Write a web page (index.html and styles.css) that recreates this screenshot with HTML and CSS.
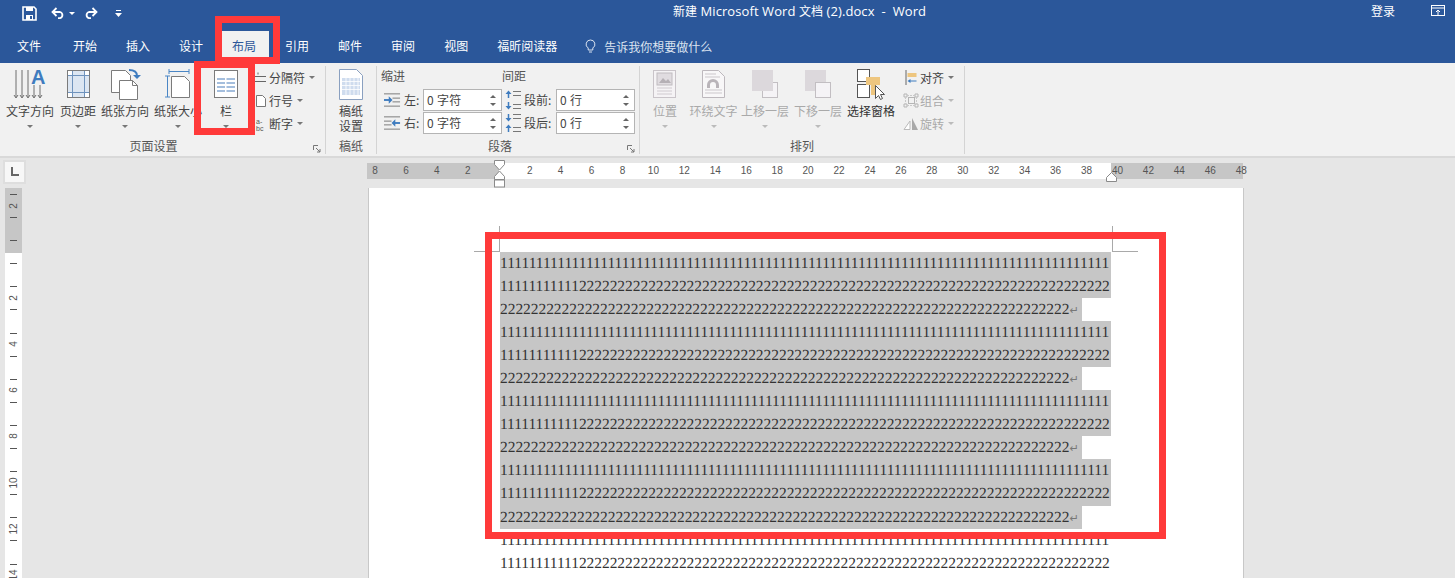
FILE: index.html
```html
<!DOCTYPE html>
<html lang="zh-CN">
<head>
<meta charset="utf-8">
<title>新建 Microsoft Word 文档 (2).docx - Word</title>
<link rel="stylesheet" href="styles.css">
</head>
<body>
<div class="app">
  <header class="titlebar">
    <div class="qat">
      <svg class="qat-save" width="15" height="15" viewBox="0 0 15 15"><path d="M1 1h11l2 2v11H1z" fill="none" stroke="#fff" stroke-width="1.6"/><rect x="4" y="1" width="7" height="4" fill="#fff"/><rect x="4" y="9" width="7" height="5" fill="#fff"/><rect x="8" y="10" width="2" height="3" fill="#2b579a"/></svg>
      <svg class="qat-undo" width="14" height="13" viewBox="0 0 14 13"><path d="M3 6.500h6a3.200 3.200 0 0 1 0 6.200H7" transform="translate(0 -1.500)" fill="none" stroke="#fff" stroke-width="1.800"/><path d="M5.500 1 1.500 5l4 4" fill="none" stroke="#fff" stroke-width="1.800"/></svg>
      <span class="qat-caret"></span>
      <svg class="qat-redo" width="14" height="13" viewBox="0 0 14 13"><path d="M11 5H5a3.200 3.200 0 0 0 0 6.200h2" fill="none" stroke="#fff" stroke-width="1.800"/><path d="M8.500 1l4 4-4 4" fill="none" stroke="#fff" stroke-width="1.800"/></svg>
      <svg class="qat-more" width="7" height="8" viewBox="0 0 7 8"><rect x="1" y="0" width="5" height="1" fill="#fff"/><path d="M0 3h7L3.500 7z" fill="#fff"/></svg>
    </div>
    <div class="doc-title"><span class="cjk">新建</span> Microsoft Word <span class="cjk">文档</span> (2).docx&nbsp; -&nbsp; Word</div>
    <div class="login">登录</div>
    <svg class="restore" width="14" height="11" viewBox="0 0 14 11"><rect x=".5" y=".5" width="13" height="10" fill="none" stroke="#fff"/><path d="M0 3h14" stroke="#fff"/><path d="M7 10V5M5 7l2-2 2 2" fill="none" stroke="#fff"/></svg>
  </header>

  <nav class="tabs">
    <div class="tab tab-file">文件</div>
    <div class="tab">开始</div>
    <div class="tab">插入</div>
    <div class="tab">设计</div>
    <div class="tab active">布局</div>
    <div class="tab">引用</div>
    <div class="tab">邮件</div>
    <div class="tab">审阅</div>
    <div class="tab">视图</div>
    <div class="tab">福昕阅读器</div>
    <div class="tell">
      <svg width="11" height="14" viewBox="0 0 11 14"><path d="M5.500 1a4.300 4.300 0 0 0-2.300 8v2h4.600V9a4.300 4.300 0 0 0-2.300-8z" fill="none" stroke="#dbe3f0"/><path d="M4 13h3" stroke="#dbe3f0"/></svg>
      <span>告诉我你想要做什么</span>
    </div>
  </nav>

  <section class="ribbon">
    <div class="group g-page">
      <div class="group-body">
        <div class="big w54">
          <svg class="ico" width="36" height="34" viewBox="0 0 36 34"><g stroke="#6e6e6e" fill="none"><path d="M4 3v27M10 3v27M16 3v27M22 18v12M28 18v12"/><path d="M2 28l2 3 2-3M8 28l2 3 2-3M14 28l2 3 2-3M20 28l2 3 2-3M26 28l2 3 2-3"/></g><text x="19" y="17" class="ico-a">A</text></svg>
          <span class="lbl">文字方向</span><i class="caret"></i>
        </div>
        <div class="big w42">
          <svg class="ico" width="26" height="34" viewBox="0 0 26 34"><rect x="2.500" y="3.500" width="22" height="27" fill="#fff" stroke="#7b7b7b"/><rect x="7" y="4" width="13" height="26" fill="#dce6f2"/><rect x="3" y="8" width="21" height="18" fill="#dce6f2"/><path d="M7.500 4v26M19.500 4v26M3 8.500h21M3 25.500h21" stroke="#6f93bd"/></svg>
          <span class="lbl">页边距</span><i class="caret"></i>
        </div>
        <div class="big w52">
          <svg class="ico" width="32" height="34" viewBox="0 0 32 34"><path d="M2.500 3.500h14l5 5v17h-19z" fill="#fff" stroke="#7b7b7b"/><path d="M10.500 13.500h13l5 5v14h-18z" fill="#fff" stroke="#7b7b7b"/><path d="M23.500 13.500v5h5" fill="none" stroke="#7b7b7b"/><path d="M20 3c5 0 8 2 8 6" fill="none" stroke="#3f7cbf" stroke-width="2"/><path d="M24 8h8l-4 4z" fill="#3f7cbf"/></svg>
          <span class="lbl">纸张方向</span><i class="caret"></i>
        </div>
        <div class="big w54">
          <svg class="ico" width="26" height="34" viewBox="0 0 26 34"><path d="M6.500 9.500h13l5 5v16h-18z" fill="#fff" stroke="#7b7b7b"/><path d="M4 4.500h20M4 2v5M24 2v5M2.500 9v21M0 9h5M0 30h5" fill="none" stroke="#4a86c5"/></svg>
          <span class="lbl">纸张大小</span><i class="caret"></i>
        </div>
        <div class="big w42">
          <svg class="ico" width="24" height="34" viewBox="0 0 24 34"><rect x=".5" y="3.500" width="23" height="27" fill="#fff" stroke="#7b7b7b"/><path d="M3 12h8M12.500 12h8.500M3 16h8M12.500 16h8.500M3 20h8M12.500 20h8.500M3 24h8M12.500 24h8.500" stroke="#4a7ebb" stroke-width="1.200"/></svg>
          <span class="lbl">栏</span><i class="caret"></i>
        </div>
        <div class="stack">
          <div class="small"><svg width="13" height="14" viewBox="0 0 13 14"><path d="M0 5.500h12M0 10.500h12" stroke="#666"/><path d="M4 1.500v2" stroke="#666"/></svg><span>分隔符</span><i class="caret inline"></i></div>
          <div class="small"><svg width="13" height="14" viewBox="0 0 13 14"><path d="M2.500 1.500h6l3 3v8h-9z" fill="#fff" stroke="#777"/></svg><span>行号</span><i class="caret inline"></i></div>
          <div class="small"><svg width="13" height="14" viewBox="0 0 13 14"><text x="2" y="7" class="ico-hy">a-</text><text x="2" y="13.500" class="ico-hy">bc</text></svg><span>断字</span><i class="caret inline"></i></div>
        </div>
      </div>
      <div class="group-label lab-page">页面设置<svg class="launch" width="8" height="8" viewBox="0 0 8 8"><path d="M.5 5V.5H5M3 3l4 4M7 4v3H4" fill="none" stroke="#777"/></svg></div>
    </div>

    <div class="group g-paper">
      <div class="group-body">
        <div class="big w50">
          <svg class="ico" width="24" height="34" viewBox="0 0 24 34"><path d="M.5 2.500h17l6 6v24H.5z" fill="#fff" stroke="#8aa0c0"/><rect x="3" y="11" width="18" height="17" fill="#cfdcee"/><path d="M3 14.500h18M3 18.500h18M3 22.500h18M7 11v17M11 11v17M15 11v17M19 11v17" stroke="#fff" stroke-width=".8"/></svg>
          <span class="lbl">稿纸<br>设置</span>
        </div>
      </div>
      <div class="group-label">稿纸</div>
    </div>

    <div class="group g-para">
      <div class="para-grid">
        <span class="head">缩进</span><span class="head head2">间距</span>
        <div class="para-row">
          <svg width="17" height="14" viewBox="0 0 18 14"><path d="M0 .5h17M9 5h8M9 9h8M0 13.500h17" stroke="#777"/><path d="M0 7h6" stroke="#3f7cbf" stroke-width="2"/><path d="M5 3l4 4-4 4z" fill="#3f7cbf"/></svg>
          <label>左:</label><div class="spin">0 字符<b></b></div>
          <svg class="sp" width="16" height="20" viewBox="0 0 16 20"><path d="M8 1.500h8M8 5.500h8M8 14.500h8M8 18.500h8" stroke="#777"/><path d="M3.500 2v6M3.500 12v6" stroke="#3f7cbf" stroke-width="1.500"/><path d="M0.500 4l3-3.500 3 3.500zM.5 16l3 3.500 3-3.500z" fill="#3f7cbf"/></svg>
          <label class="lab2">段前:</label><div class="spin">0 行<b></b></div>
        </div>
        <div class="para-row">
          <svg width="17" height="14" viewBox="0 0 18 14"><path d="M0 .5h17M0 5h8M0 9h8M0 13.500h17" stroke="#777"/><path d="M11 7h6" stroke="#3f7cbf" stroke-width="2"/><path d="M12 3L8 7l4 4z" fill="#3f7cbf"/></svg>
          <label>右:</label><div class="spin">0 字符<b></b></div>
          <svg class="sp" width="16" height="20" viewBox="0 0 16 20"><path d="M8 1.500h8M8 5.500h8M8 14.500h8M8 18.500h8" stroke="#777"/><path d="M3.500 1v5M3.500 14v5" stroke="#3f7cbf" stroke-width="1.500"/><path d="M.5 5l3 3.500 3-3.500zM.5 15l3-3.500 3 3.500z" fill="#3f7cbf"/></svg>
          <label class="lab2">段后:</label><div class="spin">0 行<b></b></div>
        </div>
      </div>
      <div class="group-label lab-para">段落<svg class="launch" width="8" height="8" viewBox="0 0 8 8"><path d="M.5 5V.5H5M3 3l4 4M7 4v3H4" fill="none" stroke="#777"/></svg></div>
    </div>

    <div class="group g-arr">
      <div class="group-body">
        <div class="big w50 off">
          <svg class="ico" width="24" height="34" viewBox="0 0 24 34"><rect x=".5" y="3.500" width="22" height="27" fill="#f5f3f5" stroke="#c9c4c9"/><rect x="4" y="6" width="15" height="12" fill="#e0dce0" stroke="#c0bcc0"/><path d="M6 16l4-5 3 3 2-2 3 4z" fill="#b5b0b5"/><path d="M4 21h15M4 24h15M4 27h15" stroke="#cfcacf"/></svg>
          <span class="lbl">位置</span><i class="caret"></i>
        </div>
        <div class="big w47 off">
          <svg class="ico" width="24" height="34" viewBox="0 0 24 34"><path d="M.5 3.500h16l6 6v21H.5z" fill="#f8f7f8" stroke="#bdb8bd"/><path d="M3 7h11M3 10h15M3 26h17M3 23h17" stroke="#cbc7cb"/><path d="M5 21v-3a6 6 0 0 1 12 0v3h-3v-3a3 3 0 0 0-6 0v3z" fill="#b9b4b9"/></svg>
          <span class="lbl">环绕文字</span><i class="caret"></i>
        </div>
        <div class="big w56 off">
          <svg class="ico" width="28" height="34" viewBox="0 0 28 34"><rect x="11.500" y="15.500" width="15" height="15" fill="#f5f3f6" stroke="#c2bec2"/><rect x="1" y="3" width="21" height="21" fill="#dcd8dc"/></svg>
          <span class="lbl">上移一层</span><i class="caret"></i>
        </div>
        <div class="big w50 off">
          <svg class="ico" width="28" height="34" viewBox="0 0 28 34"><rect x="1" y="3" width="21" height="21" fill="#dcd8dc"/><rect x="11.500" y="15.500" width="15" height="15" fill="#f5f3f6" stroke="#c2bec2"/></svg>
          <span class="lbl">下移一层</span><i class="caret"></i>
        </div>
        <div class="big w56">
          <svg class="ico" width="28" height="34" viewBox="0 0 28 34"><rect x=".5" y="2.500" width="12" height="12" fill="#fff" stroke="#555"/><rect x=".5" y="17.500" width="12" height="13" fill="#fff" stroke="#555"/><path d="M9 10h14v8h-4v10h-5v-10H9z" fill="#eec67f"/><path d="M18.500 18.500v13l3-3 2 4 2-1-2-4h4z" fill="#fff" stroke="#555"/></svg>
          <span class="lbl dark">选择窗格</span>
        </div>
        <div class="stack stack-arr">
          <div class="small"><svg width="13" height="15" viewBox="0 0 13 15"><path d="M1.500 0v15" stroke="#666"/><rect x="3" y="3" width="9" height="4" fill="#eec67f"/><path d="M5 11h7" stroke="#3f7cbf"/><path d="M6 9l-3 2 3 2z" fill="#3f7cbf"/></svg><span>对齐</span><i class="caret inline"></i></div>
          <div class="small off"><svg width="16" height="15" viewBox="0 0 16 15"><path d="M1 1h3v3H1zM12 1h3v3h-3zM1 11h3v3H1zM12 11h3v3h-3z" fill="none" stroke="#b5b5b5"/><rect x="5.500" y="4.500" width="6" height="6" fill="none" stroke="#b5b5b5"/><path d="M4 2.500h8M4 12.500h8M2.500 4v7M13.500 4v7" stroke="#c9c9c9" stroke-dasharray="2 1"/></svg><span>组合</span><i class="caret inline"></i></div>
          <div class="small off"><svg width="16" height="15" viewBox="0 0 16 15"><path d="M7 13.500H1L7 5z" fill="#fff" stroke="#bbb"/><path d="M9 2v12h6z" fill="#a8a8a8"/></svg><span>旋转</span><i class="caret inline"></i></div>
        </div>
      </div>
      <div class="group-label">排列</div>
    </div>
    <div class="ribbon-rest"></div>
  </section>

  <main class="workspace">
    <aside class="side">
      <div class="corner"><div class="corner-btn"><span class="corner-l"></span></div></div>
      <div class="vruler">
        <div class="vc"><span>2</span></div><div class="vc"></div><div class="vc"></div><div class="vc"></div>
        <div class="vc"><span>2</span></div><div class="vc"></div><div class="vc"><span>4</span></div><div class="vc"></div>
        <div class="vc"><span>6</span></div><div class="vc"></div><div class="vc"><span>8</span></div><div class="vc"></div>
        <div class="vc"><span>10</span></div><div class="vc"></div><div class="vc"><span>12</span></div><div class="vc"></div>
        <div class="vc"><span>14</span></div>
      </div>
    </aside>
    <div class="canvas">
      <div class="hruler">
        <div class="htrack">
          <span>8</span><span>6</span><span>4</span><span>2</span><span></span><span>2</span><span>4</span><span>6</span><span>8</span><span>10</span><span>12</span><span>14</span><span>16</span><span>18</span><span>20</span><span>22</span><span>24</span><span>26</span><span>28</span><span>30</span><span>32</span><span>34</span><span>36</span><span>38</span><span>40</span><span>42</span><span>44</span><span>46</span><span>48</span>
        </div>
        <svg class="mark-left" width="13" height="28" viewBox="0 0 13 28"><path d="M1.500.5h10v4L6.500 10l-5-5.500z" fill="#fff" stroke="#8a8a8a"/><path d="M6.500 11l5 5.500v3h-10v-3z" fill="#fff" stroke="#8a8a8a"/><rect x="1.500" y="20" width="10" height="7" fill="#fff" stroke="#8a8a8a"/></svg>
        <svg class="mark-right" width="13" height="10" viewBox="0 0 13 10"><path d="M6.500.5l5 5v4h-10v-4z" fill="#fff" stroke="#8a8a8a"/></svg>
      </div>
      <div class="page">
        <i class="crop c1"></i><i class="crop c2"></i><i class="crop c3"></i><i class="crop c4"></i>
        <p class="line sel">1111111111111111111111111111111111111111111111111111111111111111111111111111111111111</p>
        <p class="line sel mid">11111111111222222222222222222222222222222222222222222222222222222222222222222222</p>
        <p class="line sel short">22222222222222222222222222222222222222222222222222222222222222222222222222<em>↵</em></p>
        <p class="line sel">1111111111111111111111111111111111111111111111111111111111111111111111111111111111111</p>
        <p class="line sel mid">11111111111222222222222222222222222222222222222222222222222222222222222222222222</p>
        <p class="line sel short">22222222222222222222222222222222222222222222222222222222222222222222222222<em>↵</em></p>
        <p class="line sel">1111111111111111111111111111111111111111111111111111111111111111111111111111111111111</p>
        <p class="line sel mid">11111111111222222222222222222222222222222222222222222222222222222222222222222222</p>
        <p class="line sel short">22222222222222222222222222222222222222222222222222222222222222222222222222<em>↵</em></p>
        <p class="line sel">1111111111111111111111111111111111111111111111111111111111111111111111111111111111111</p>
        <p class="line sel mid">11111111111222222222222222222222222222222222222222222222222222222222222222222222</p>
        <p class="line sel short">22222222222222222222222222222222222222222222222222222222222222222222222222<em>↵</em></p>
        <p class="line">1111111111111111111111111111111111111111111111111111111111111111111111111111111111111</p>
        <p class="line mid">11111111111222222222222222222222222222222222222222222222222222222222222222222222</p>
      </div>
    </div>
  </main>

  <div class="red r-tab"></div>
  <div class="red r-col"></div>
  <div class="red r-text"></div>
</div>
</body>
</html>
```

FILE: styles.css
```css
* { box-sizing: border-box; }
html, body { margin: 0; height: 100%; }
body { overflow: hidden; font-family: "Noto Sans CJK SC", "Noto Sans", sans-serif; font-size: 12px; color: #444; }
.app { position: relative; width: 1455px; height: 578px; overflow: hidden; display: flex; flex-direction: column; background: #e6e6e6; }

/* title bar */
.titlebar { height: 31px; flex: none; background: #2b579a; color: #fff; display: flex; align-items: center; padding-left: 22px; }
.qat { display: flex; align-items: center; width: 105px; flex: none; }
.qat-save { margin-top: -4px; }
.qat-undo { margin-left: 14px; margin-top: -5px; }
.qat-caret { width: 0; height: 0; margin-left: 4px; margin-top: -4px; border: 3px solid transparent; border-top: 3px solid #fff; border-bottom: 0; }
.qat-redo { margin-left: 9px; margin-top: -5px; }
.qat-more { margin-left: 17px; margin-top: -4px; }
.doc-title { margin-left: 546px; margin-top: -9px; white-space: nowrap; font-family: "Open Sans", "Noto Sans CJK SC", sans-serif; font-size: 13px; line-height: 16px; letter-spacing: .09px; }
.doc-title .cjk { font-family: "Noto Sans CJK SC", sans-serif; font-size: 12px; letter-spacing: 0; }
.login { margin-left: auto; margin-right: 36px; margin-top: -9px; line-height: 16px; }
.restore { margin-right: 10px; margin-top: -10px; }

/* tabs */
.tabs { height: 32px; flex: none; background: #2b579a; color: #fff; display: flex; gap: 3px; padding-left: 4px; align-items: stretch; }
.tab { padding: 0 13px; line-height: 30px; }
.tab-file { margin-right: 3px; }
.tab.active { background: #f1f1f1; color: #2b579a; }
.tell { display: flex; align-items: center; gap: 8px; margin-left: 12px; margin-top: -2px; color: #dbe3f0; }

/* ribbon */
.ribbon { height: 95px; flex: none; background: #f1f1f1; border-bottom: 2px solid #d9d9d9; display: flex; padding-top: 3px; }
.group { display: flex; flex-direction: column; position: relative; border-right: 1px solid #d4d4d4; margin-bottom: 2px; }
.g-page { width: 326px; }
.g-paper { width: 51px; }
.g-para { width: 263px; }
.g-arr { width: 325px; }
.ribbon-rest { flex: 1; }
.group-body { flex: 1; display: flex; min-height: 0; }
.group-label { height: 18px; line-height: 20px; text-align: center; color: #555; flex: none; }
.lab-page { padding-right: 18px; }
.lab-para { padding-right: 16px; }
.launch { position: absolute; right: 4px; bottom: 1px; }
.g-page .group-body { padding-left: 3px; }

.big { display: flex; flex-direction: column; align-items: center; flex: none; line-height: 15px; padding-top: 1px; }
.w42 { width: 42px; } .w47 { width: 47px; } .w50 { width: 50px; } .w52 { width: 52px; } .w54 { width: 54px; } .w56 { width: 56px; }
.ico { flex: none; height: 34px; margin-bottom: 2px; }
.ico-a { font: bold 20px "Liberation Sans", sans-serif; fill: #3f7cbf; }
.ico-hy { font: 7px "Liberation Sans", sans-serif; fill: #555; }
.lbl { white-space: nowrap; text-align: center; color: #444; }
.lbl.dark { color: #333; }
.caret { display: block; width: 0; height: 0; margin-top: 7px; border-left: 3px solid transparent; border-right: 3px solid transparent; border-top: 3px solid #777; }
.caret.inline { margin-top: 0; margin-left: 4px; }
.off .lbl, .off span { color: #a9a9a9; }
.off .caret { border-top-color: #bbb; }

.stack { display: flex; flex-direction: column; }
.small { height: 23px; display: flex; align-items: center; white-space: nowrap; color: #444; }
.small svg { flex: none; margin-right: 2px; margin-left: 7px; }
.stack-arr .small svg { margin-left: 4px; margin-right: 1px; width: 16px; }

/* paragraph group */
.para-grid { flex: 1; display: flex; flex-wrap: wrap; align-content: flex-start; padding-left: 4px; }
.head { width: 121px; height: 22px; line-height: 20px; color: #555; }
.head2 { width: auto; }
.para-row { width: 100%; height: 23px; display: flex; align-items: center; }
.para-row svg { flex: none; margin-left: 3px; }
.para-row svg + label { margin-left: 3px; width: 19px; flex: none; }
.para-row .sp { margin-left: 1px; }
.para-row svg + .lab2 { margin-left: 3px; width: 32px; }
.spin { width: 79px; height: 22px; flex: none; background: #fff; border: 1px solid #b4b4b4; position: relative; line-height: 20px; padding-left: 3px; color: #444; letter-spacing: .3px; margin-right: 2px; }
.spin b { position: absolute; right: 5px; top: 5px; width: 6px; height: 11px; }
.spin b::before { content: ""; position: absolute; left: 0; top: 0; border: 3px solid transparent; border-top: 0; border-bottom: 3px solid #666; }
.spin b::after { content: ""; position: absolute; left: 0; bottom: 0; border: 3px solid transparent; border-bottom: 0; border-top: 3px solid #666; }

/* workspace */
.workspace { flex: 1; display: flex; min-height: 0; }
.side { width: 367px; flex: none; display: flex; flex-direction: column; padding-left: 5px; }
.corner { height: 30px; flex: none; margin-left: -2px; width: 23px; padding-top: 2px; }
.corner-btn { position: relative; width: 23px; height: 24px; background: #f7f7f7; border: 2px solid #dedede; }
.corner-l { position: absolute; left: 6px; top: 5px; width: 8px; height: 9px; border-left: 2px solid #666; border-bottom: 2px solid #666; }
.vruler { width: 17px; flex: 1; padding-top: 6px; overflow: hidden; background: linear-gradient(#c6c6c6 65px, #fff 65px); }
.vc { height: 23.1px; position: relative; }
.vc::before { content: ""; position: absolute; left: 5px; top: 0; width: 7px; height: 1px; background: #555; }
.vc span { position: absolute; left: 0; width: 17px; top: 11.500px; height: 12px; text-align: center; font: 10px/12px "Liberation Sans", sans-serif; color: #555; transform: translateY(-6px) rotate(-90deg); }

.canvas { flex: 1; display: flex; flex-direction: column; min-width: 0; }
.hruler { height: 30px; flex: none; position: relative; padding-top: 5px; }
.htrack { width: 878px; height: 16px; display: flex; background: linear-gradient(90deg, #c6c6c6 132px, #fff 132px, #fff 744px, #c6c6c6 744px, #c6c6c6 876px, transparent 876px); font: 10px/16px "Liberation Sans", sans-serif; color: #555; }
.htrack span { flex: none; width: 30.95px; text-align: center; }
.htrack span:first-child { margin-left: -7.500px; }
.mark-left { position: absolute; left: 126px; top: 2px; }
.mark-right { position: absolute; left: 738px; top: 14px; }

.page { position: relative; margin-left: 1px; width: 876px; flex: 1; background: #fff; border-left: 1px solid #c8c8c8; border-right: 1px solid #c8c8c8; padding: 64px 0 0 131px; overflow: hidden; }
.line { margin: 0; width: 611px; height: 23.05px; line-height: 23px; font-family: "Liberation Serif", "Times New Roman", serif; font-size: 15.47px; color: #333; white-space: nowrap; text-rendering: geometricPrecision; }
.line.sel { background: #c6c6c6; }
.line.mid { letter-spacing: -.04px; }
.line.short { letter-spacing: -.04px; width: 582px; }
.line em { font-style: normal; color: #777; font-family: "DejaVu Sans", sans-serif; font-size: 11px; display: inline-block; width: 13px; letter-spacing: 0; }
.crop { position: absolute; background: #a9a9a9; }
.c1 { left: 130px; top: 38px; width: 1px; height: 25px; }
.c2 { left: 105px; top: 63px; width: 26px; height: 1px; }
.c3 { left: 743px; top: 38px; width: 1px; height: 25px; }
.c4 { left: 743px; top: 63px; width: 26px; height: 1px; }

/* red annotation boxes */
.red { position: absolute; border: 7px solid #ff3a3a; pointer-events: none; }
.r-tab { left: 215px; top: 16px; width: 65px; height: 48px; }
.r-col { left: 194px; top: 61px; width: 61px; height: 74px; }
.r-text { left: 485px; top: 232px; width: 681px; height: 307px; }
```
